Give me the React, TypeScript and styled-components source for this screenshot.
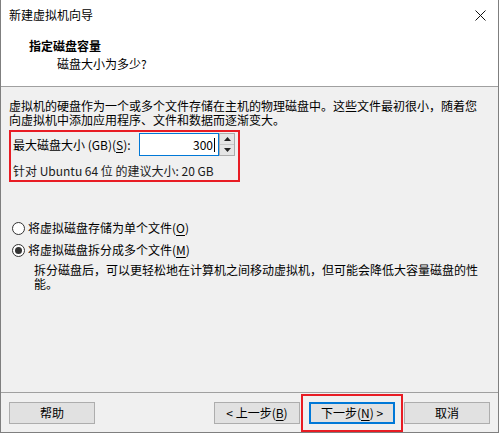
import React from "react";
import styled, { createGlobalStyle } from "styled-components";

const GlobalStyle = createGlobalStyle`
  html, body {
    margin: 0;
    padding: 0;
    background: #ffffff;
  }
  body {
    font-family: "Noto Sans CJK SC", "Microsoft YaHei", sans-serif;
    font-size: 12px;
    color: #000;
  }
`;

const Window = styled.div`
  width: 499px;
  height: 433px;
  box-sizing: border-box;
  display: flex;
  flex-direction: column;
  border: 1px solid #7f7f7f;
  border-top: none;
  background: #f0f0f0;
  overflow: hidden;
`;

const TitleBar = styled.div`
  height: 30px;
  flex: none;
  display: flex;
  align-items: center;
  justify-content: space-between;
  padding: 0 12px 0 8px;
  background: #fff;
  line-height: 16px;
`;

const CloseBtn = styled.svg`
  width: 11px;
  height: 11px;
`;

const Header = styled.div`
  height: 57px;
  flex: none;
  box-sizing: border-box;
  background: #fff;
  border-bottom: 1px solid #a0a0a0;
  padding: 8px 0 0 28px;
`;

const HeaderTitle = styled.div`
  font-weight: bold;
  line-height: 16px;
`;

const HeaderSub = styled.div`
  margin-top: 2px;
  padding-left: 28px;
  line-height: 16px;
`;

const Body = styled.div`
  flex: 1;
  padding: 12px 8px 0 8px;
  display: flex;
  flex-direction: column;
`;

const Para = styled.div`
  line-height: 14px;
`;

const Marked = styled.div`
  margin-top: 3px;
  width: 231px;
  height: 52px;
  box-sizing: border-box;
  border: 2px solid #e81c24;
  padding: 1px 3px 0 2px;
  display: flex;
  flex-direction: column;
`;

const SizeRow = styled.div`
  display: flex;
  align-items: center;
  height: 23px;
`;

const SizeLabel = styled.span`
  flex: 1;
  line-height: 16px;
`;

const Key = styled.span`
  text-decoration: underline;
  text-underline-offset: 2px;
`;

const NumberField = styled.div`
  width: 80px;
  height: 23px;
  box-sizing: border-box;
  background: #fff;
  border: 1px solid #0078d7;
  display: flex;
  align-items: center;
  justify-content: flex-end;
  padding-right: 3px;
  line-height: 16px;
`;

const Caret = styled.span`
  width: 1px;
  height: 14px;
  background: #000;
  margin-left: 1px;
`;

const Spinner = styled.div`
  width: 16px;
  height: 23px;
  box-sizing: border-box;
  border: 1px solid #adadad;
  background: #e5e5e5;
  display: flex;
  flex-direction: column;
`;

const SpinHalf = styled.div<{ $top?: boolean }>`
  flex: 1;
  display: flex;
  align-items: center;
  justify-content: center;
  border-bottom: ${(p) => (p.$top ? "1px solid #c8c8c8" : "none")};
`;

const Hint = styled.div`
  margin-top: 8px;
  line-height: 14px;
  color: #1a1a1a;
`;

const Options = styled.div`
  margin-top: 37px;
  display: flex;
  flex-direction: column;
  gap: 4px;
`;

const RadioRow = styled.label`
  display: flex;
  align-items: center;
  height: 18px;
  padding-left: 3px;
  line-height: 16px;
`;

const RadioDot = styled.span<{ $on?: boolean }>`
  width: 13px;
  height: 13px;
  box-sizing: border-box;
  border-radius: 50%;
  border: 1px solid #333;
  background: #fff;
  margin-right: 3px;
  display: flex;
  align-items: center;
  justify-content: center;
  &::after {
    content: "";
    width: 7px;
    height: 7px;
    border-radius: 50%;
    background: ${(p) => (p.$on ? "#333" : "transparent")};
  }
`;

const Note = styled.div`
  margin-top: 4px;
  padding-left: 25px;
  line-height: 14px;
`;

const Footer = styled.div`
  height: 40px;
  flex: none;
  box-sizing: border-box;
  border-top: 1px solid #a0a0a0;
  padding: 9px 8px 0 8px;
  display: flex;
  align-items: flex-start;
`;

const Button = styled.div<{ $default?: boolean }>`
  width: 86px;
  height: 22px;
  box-sizing: border-box;
  background: #e1e1e1;
  border: ${(p) => (p.$default ? "2px solid #0078d7" : "1px solid #adadad")};
  display: flex;
  align-items: center;
  justify-content: center;
  line-height: 16px;
`;

const NavGroup = styled.div`
  margin-left: auto;
  display: flex;
  gap: 9px;
`;

const Highlight = styled.div`
  outline: 2px solid #e81c24;
  outline-offset: 6px;
`;

export default function App() {
  return (
    <>
      <GlobalStyle />
      <Window>
        <TitleBar>
          <span>新建虚拟机向导</span>
          <CloseBtn viewBox="0 0 11 11">
            <path d="M0.5 0.5 L10.5 10.5 M10.5 0.5 L0.5 10.5" stroke="#111" strokeWidth="1" />
          </CloseBtn>
        </TitleBar>
        <Header>
          <HeaderTitle>指定磁盘容量</HeaderTitle>
          <HeaderSub>磁盘大小为多少?</HeaderSub>
        </Header>
        <Body>
          <Para>
            虚拟机的硬盘作为一个或多个文件存储在主机的物理磁盘中。这些文件最初很小，随着您
            <br />
            向虚拟机中添加应用程序、文件和数据而逐渐变大。
          </Para>
          <Marked>
            <SizeRow>
              <SizeLabel>
                最大磁盘大小 (GB)(<Key>S</Key>):
              </SizeLabel>
              <NumberField>
                300
                <Caret />
              </NumberField>
              <Spinner>
                <SpinHalf $top>
                  <svg width="7" height="4" viewBox="0 0 7 4">
                    <path d="M0 4 L3.5 0 L7 4 Z" fill="#222" />
                  </svg>
                </SpinHalf>
                <SpinHalf>
                  <svg width="7" height="4" viewBox="0 0 7 4">
                    <path d="M0 0 L7 0 L3.5 4 Z" fill="#222" />
                  </svg>
                </SpinHalf>
              </Spinner>
            </SizeRow>
            <Hint>针对 Ubuntu 64 位 的建议大小: 20 GB</Hint>
          </Marked>
          <Options>
            <RadioRow>
              <RadioDot />
              将虚拟磁盘存储为单个文件(<Key>O</Key>)
            </RadioRow>
            <RadioRow>
              <RadioDot $on />
              将虚拟磁盘拆分成多个文件(<Key>M</Key>)
            </RadioRow>
          </Options>
          <Note>
            拆分磁盘后，可以更轻松地在计算机之间移动虚拟机，但可能会降低大容量磁盘的性
            <br />
            能。
          </Note>
        </Body>
        <Footer>
          <Button>帮助</Button>
          <NavGroup>
            <Button>
              &lt; 上一步(<Key>B</Key>)
            </Button>
            <Highlight>
              <Button $default>
                下一步(<Key>N</Key>) &gt;
              </Button>
            </Highlight>
            <Button>取消</Button>
          </NavGroup>
        </Footer>
      </Window>
    </>
  );
}
